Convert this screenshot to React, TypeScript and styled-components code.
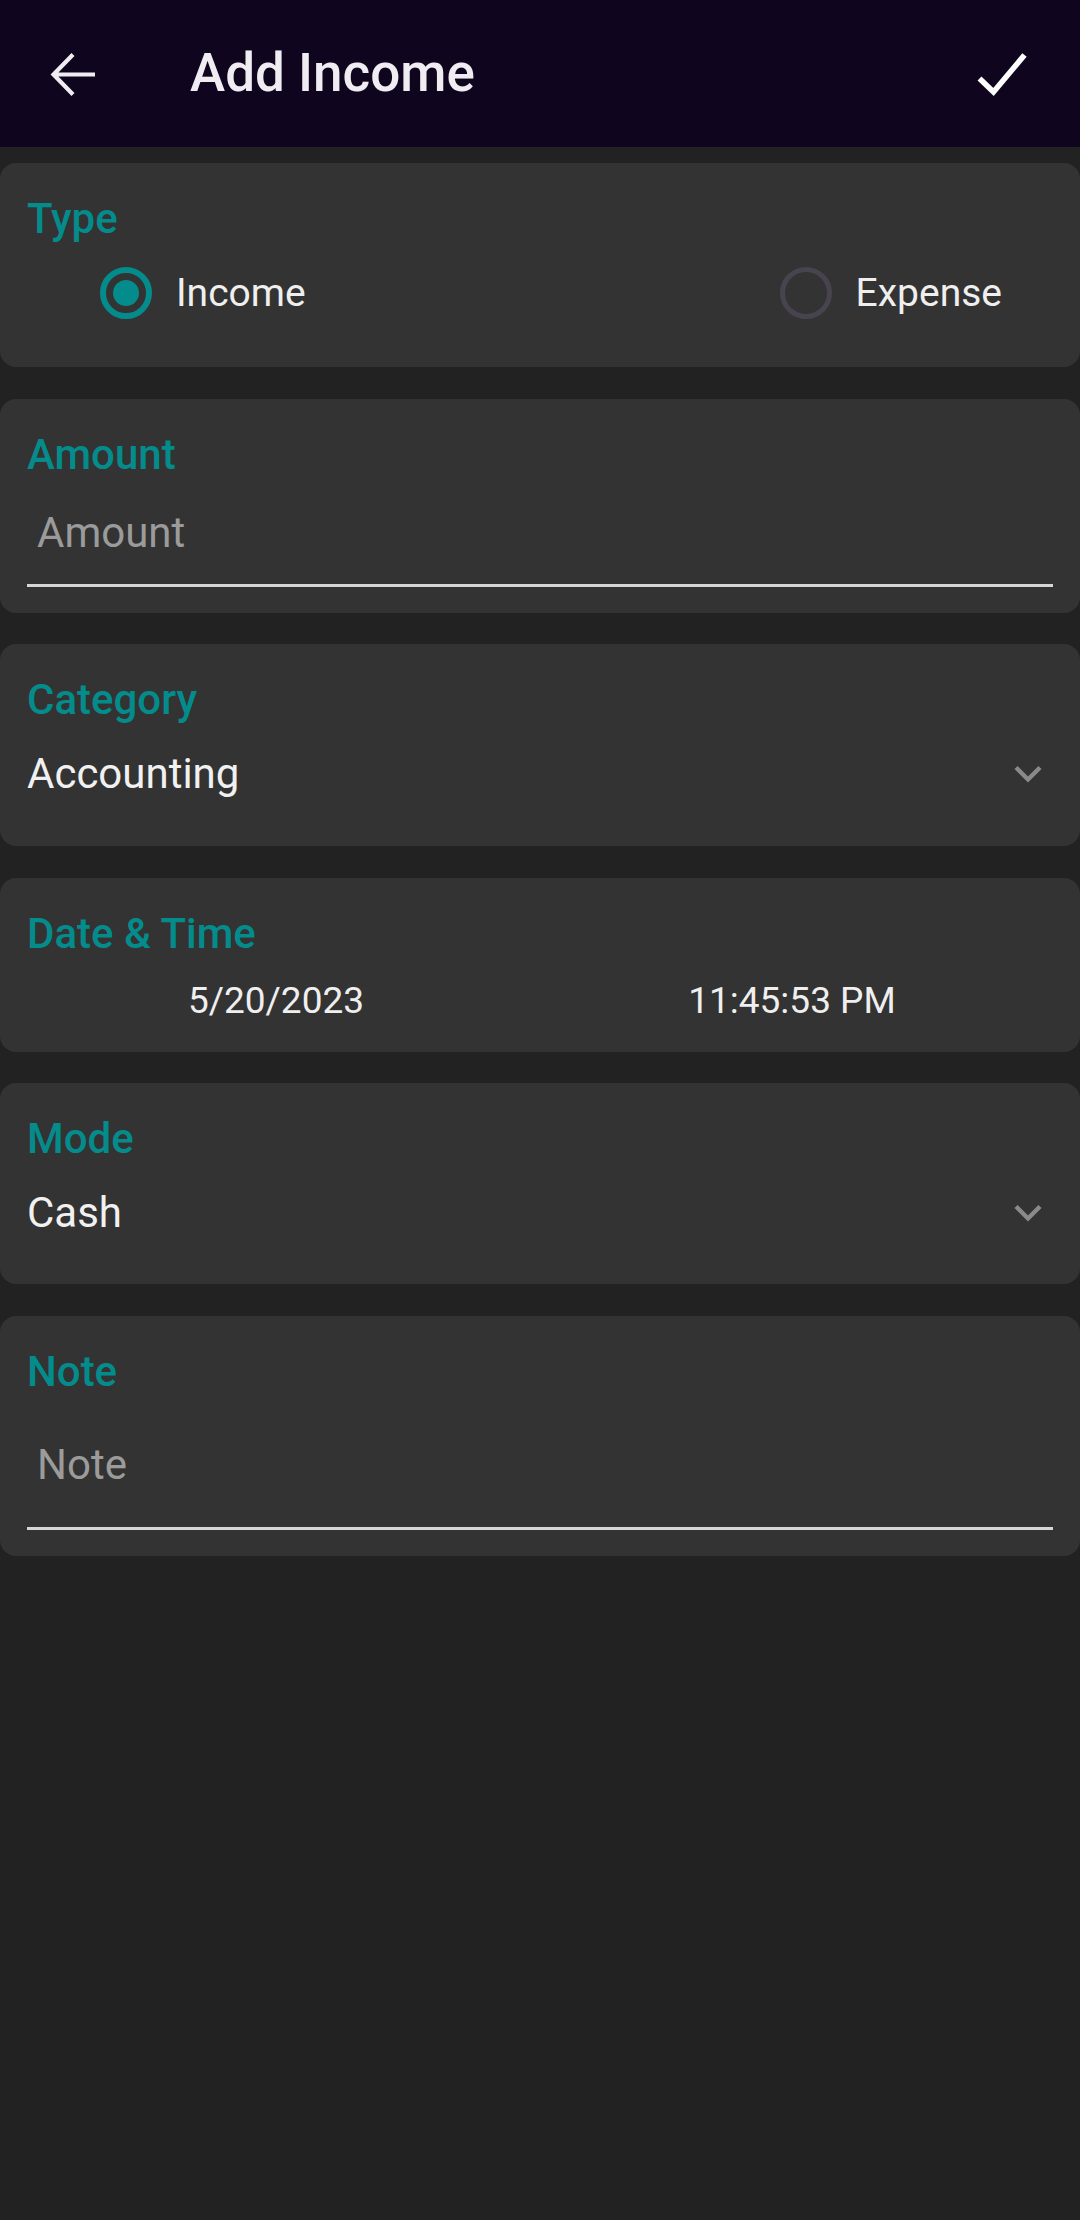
import React from "react";
import styled, { createGlobalStyle } from "styled-components";

const GlobalStyle = createGlobalStyle`
  html, body {
    margin: 0;
    padding: 0;
    background: #222222;
  }
  body {
    font-family: Roboto, "Noto Sans", "Liberation Sans", sans-serif;
    -webkit-font-smoothing: antialiased;
  }
  #root {
    min-height: 2220px;
    background: #222222;
  }
`;

const Page = styled.div`
  width: 1080px;
  min-height: 2220px;
  background: #222222;
  display: flex;
  flex-direction: column;
`;

const AppBar = styled.header`
  height: 147px;
  background: #10051f;
  display: flex;
  align-items: center;
  padding: 0 46px 0 41px;
  box-sizing: border-box;
`;

const IconButton = styled.button`
  width: 63px;
  height: 63px;
  padding: 0;
  border: none;
  background: transparent;
  display: flex;
  align-items: center;
  justify-content: center;
  cursor: pointer;
  flex: none;
`;

const Title = styled.h1`
  margin: 0 0 0 86px;
  font-size: 53px;
  font-weight: 500;
  color: #efedf2;
  line-height: 1;
  flex: 1;
`;

const Form = styled.main`
  display: flex;
  flex-direction: column;
  gap: 31.5px;
  padding: 16px 0 0 0;
`;

const Card = styled.section<{ $pb: number }>`
  background: #333333;
  border-radius: 16px;
  padding: 31px 27px ${(p) => p.$pb}px 27px;
  display: flex;
  flex-direction: column;
`;

const FieldLabel = styled.div`
  font-size: 42px;
  font-weight: 500;
  line-height: 50px;
  height: 50px;
  color: #048b8b;
`;

const RadioGroup = styled.div`
  margin-top: 23px;
  height: 52px;
  display: flex;
  align-items: center;
  justify-content: space-between;
  padding: 0 51px 0 73px;
`;

const RadioOption = styled.label`
  display: flex;
  align-items: center;
  gap: 24px;
  cursor: pointer;
`;

const RadioCircle = styled.span<{ $checked?: boolean }>`
  width: 52px;
  height: 52px;
  box-sizing: border-box;
  border-radius: 50%;
  border: ${(p) => (p.$checked ? "6px solid #048b8b" : "5px solid #47434f")};
  display: flex;
  align-items: center;
  justify-content: center;
  &::after {
    content: "";
    display: ${(p) => (p.$checked ? "block" : "none")};
    width: 26px;
    height: 26px;
    border-radius: 50%;
    background: #048b8b;
  }
`;

const RadioText = styled.span`
  font-size: 39px;
  color: #efefef;
  line-height: 52px;
`;

const TextInput = styled.input<{ $mt: number; $pb: number }>`
  display: block;
  width: 100%;
  box-sizing: border-box;
  margin-top: ${(p) => p.$mt}px;
  height: ${(p) => 50 + p.$pb + 3}px;
  padding: 0 10px ${(p) => p.$pb}px 10px;
  border: none;
  border-bottom: 3px solid #d6d6d6;
  background: transparent;
  color: #efefef;
  font-family: Roboto, "Noto Sans", sans-serif;
  font-size: 42px;
  line-height: 50px;
  outline: none;
  &::placeholder {
    color: #9b9b9b;
  }
`;

const SelectRow = styled.div`
  margin-top: 24px;
  height: 50px;
  display: flex;
  align-items: center;
  justify-content: space-between;
  padding-right: 11px;
`;

const SelectValue = styled.span`
  font-size: 42px;
  line-height: 50px;
  color: #f1f1f1;
`;

const DateRow = styled.div`
  margin: 20px 3px 0 -9px;
  display: grid;
  grid-template-columns: 1fr 1fr;
`;

const DateCell = styled.span`
  font-size: 37px;
  line-height: 44px;
  color: #efefef;
  text-align: center;
`;

const BackIcon = () => (
  <svg width="63" height="63" viewBox="0 0 63 63" fill="none">
    <path
      d="M13 32.5 H54 M32 12.5 L12.5 32.5 L32 52.5"
      stroke="#efedf2"
      strokeWidth="4.2"
      strokeLinecap="butt"
      strokeLinejoin="miter"
    />
  </svg>
);

const CheckIcon = () => (
  <svg width="63" height="63" viewBox="0 0 63 63" fill="none">
    <path
      d="M8.5 36.5 L22.5 50 L53.5 13"
      stroke="#ffffff"
      strokeWidth="5.6"
      strokeLinecap="butt"
      strokeLinejoin="miter"
    />
  </svg>
);

const Chevron = () => (
  <svg width="28" height="18" viewBox="0 0 28 18" fill="none">
    <path d="M2 2.5 L14 14.5 L26 2.5" stroke="#8a8a8a" strokeWidth="4.4" />
  </svg>
);

export default function App() {
  return (
    <>
      <GlobalStyle />
      <Page>
        <AppBar>
          <IconButton aria-label="Back">
            <BackIcon />
          </IconButton>
          <Title>Add Income</Title>
          <IconButton aria-label="Save">
            <CheckIcon />
          </IconButton>
        </AppBar>
        <Form>
          <Card $pb={48}>
            <FieldLabel>Type</FieldLabel>
            <RadioGroup>
              <RadioOption>
                <RadioCircle $checked />
                <RadioText>Income</RadioText>
              </RadioOption>
              <RadioOption>
                <RadioCircle />
                <RadioText>Expense</RadioText>
              </RadioOption>
            </RadioGroup>
          </Card>
          <Card $pb={26}>
            <FieldLabel>Amount</FieldLabel>
            <TextInput $mt={28} $pb={26} placeholder="Amount" />
          </Card>
          <Card $pb={47}>
            <FieldLabel>Category</FieldLabel>
            <SelectRow>
              <SelectValue>Accounting</SelectValue>
              <Chevron />
            </SelectRow>
          </Card>
          <Card $pb={29}>
            <FieldLabel>Date &amp; Time</FieldLabel>
            <DateRow>
              <DateCell>5/20/2023</DateCell>
              <DateCell>11:45:53 PM</DateCell>
            </DateRow>
          </Card>
          <Card $pb={46}>
            <FieldLabel>Mode</FieldLabel>
            <SelectRow>
              <SelectValue>Cash</SelectValue>
              <Chevron />
            </SelectRow>
          </Card>
          <Card $pb={26}>
            <FieldLabel>Note</FieldLabel>
            <TextInput $mt={43} $pb={37} placeholder="Note" />
          </Card>
        </Form>
      </Page>
    </>
  );
}
